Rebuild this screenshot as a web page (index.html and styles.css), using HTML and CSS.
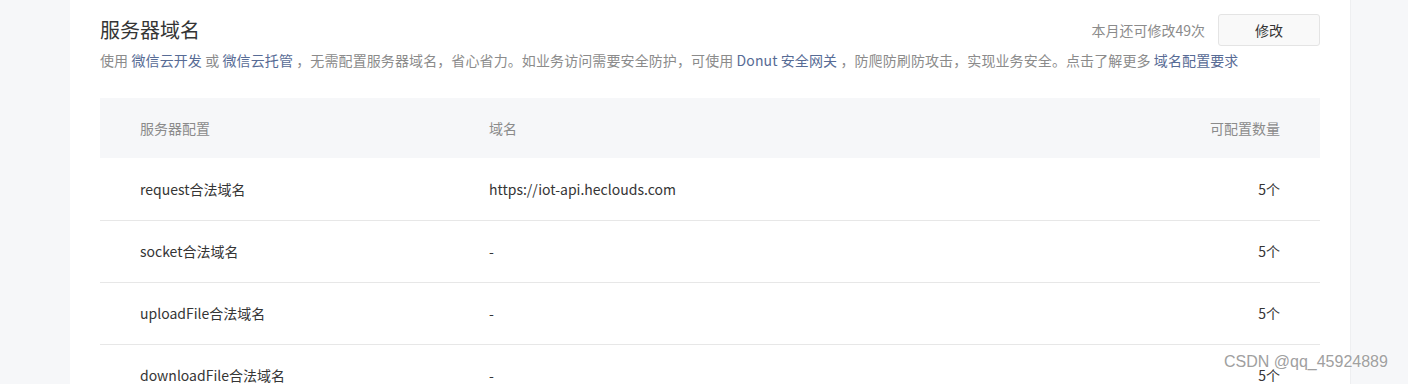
FILE: index.html
```html
<!DOCTYPE html>
<html lang="zh-CN">
<head>
    <meta charset="UTF-8">
    <title>服务器域名</title>
    <link rel="stylesheet" href="styles.css">
</head>
<body>
    <div class="page">
        <div class="card">
            <div class="section-head">
                <h2 class="title">服务器域名</h2>
                <div class="head-ops">
                    <span class="quota">本月还可修改49次</span>
                    <button class="btn">修改</button>
                </div>
            </div>
            <p class="desc">使用 <a href="#">微信云开发</a> 或 <a href="#">微信云托管</a> ，无需配置服务器域名，省心省力。如业务访问需要安全防护，可使用 <a href="#">Donut 安全网关</a> ，防爬防刷防攻击，实现业务安全。点击了解更多 <a href="#">域名配置要求</a></p>

            <table class="domain-table">
                <thead>
                    <tr>
                        <th class="col-name">服务器配置</th>
                        <th class="col-domain">域名</th>
                        <th class="col-num">可配置数量</th>
                    </tr>
                </thead>
                <tbody>
                    <tr>
                        <td class="col-name">request合法域名</td>
                        <td class="col-domain">https://iot-api.heclouds.com</td>
                        <td class="col-num">5个</td>
                    </tr>
                    <tr>
                        <td class="col-name">socket合法域名</td>
                        <td class="col-domain">-</td>
                        <td class="col-num">5个</td>
                    </tr>
                    <tr>
                        <td class="col-name">uploadFile合法域名</td>
                        <td class="col-domain">-</td>
                        <td class="col-num">5个</td>
                    </tr>
                    <tr>
                        <td class="col-name">downloadFile合法域名</td>
                        <td class="col-domain">-</td>
                        <td class="col-num">5个</td>
                    </tr>
                </tbody>
            </table>
        </div>
    </div>
    <div class="watermark">CSDN @qq_45924889</div>
</body>
</html>
```

FILE: styles.css
```css
* {
    margin: 0;
    padding: 0;
    box-sizing: border-box;
}

html, body {
    height: 384px;
    overflow: hidden;
}

body {
    font-family: "Noto Sans CJK SC", "Liberation Sans", sans-serif;
    background-color: #f6f7f9;
    color: #353535;
    font-size: 14px;
}

.page {
    padding-left: 70px;
    width: 1351px;
}

.card {
    background: #ffffff;
    padding: 14px 30px 0;
    border-right: 1px solid #eeeff1;
    height: 420px;
}

.section-head {
    display: flex;
    justify-content: space-between;
    align-items: center;
}

.title {
    font-size: 20px;
    font-weight: normal;
    line-height: 32px;
    color: #353535;
}

.desc {
    font-size: 14px;
    line-height: 22px;
    color: #8b8b8b;
    margin-top: 3px;
    white-space: nowrap;
    letter-spacing: 0.1px;
}

.desc a {
    color: #576b95;
    text-decoration: none;
}

.head-ops {
    display: flex;
    align-items: center;
    gap: 13px;
}

.quota {
    color: #8b8b8b;
    white-space: nowrap;
}

.btn {
    flex-shrink: 0;
    width: 102px;
    height: 32px;
    font-family: inherit;
    font-size: 14px;
    color: #353535;
    background: #f9f9f9;
    border: 1px solid #e4e4e4;
    border-radius: 3px;
}

.domain-table {
    width: 100%;
    border-collapse: collapse;
    margin-top: 27px;
}

.domain-table th {
    background: #f6f7f9;
    height: 60px;
    font-weight: normal;
    color: #8b8b8b;
    text-align: left;
}

.domain-table td {
    height: 62px;
    border-bottom: 1px solid #e7e7e7;
}

.col-name {
    width: 349px;
    padding-left: 40px;
}

.col-domain {
    padding-left: 40px;
}

.domain-table .col-num {
    text-align: right;
    padding-right: 40px;
}

.watermark {
    position: absolute;
    left: 1224px;
    top: 353px;
    font-family: "Liberation Sans", sans-serif;
    font-size: 16px;
    color: #a0a0a0;
    text-shadow: 0 0 2px #fff, 0 0 2px #fff;
}
```
